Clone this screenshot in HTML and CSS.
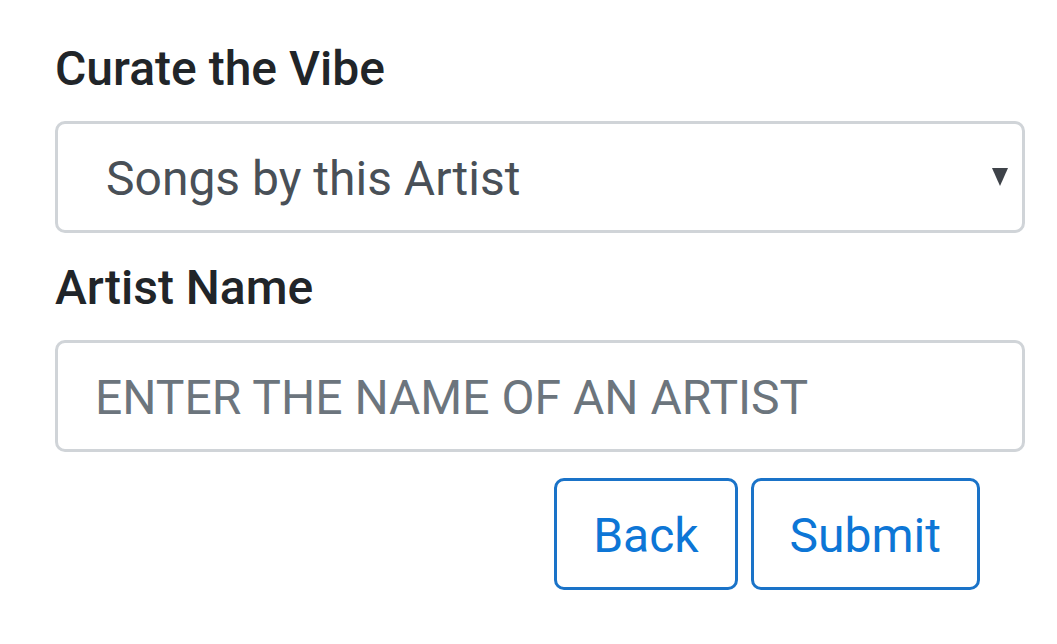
FILE: index.html
```html
<!DOCTYPE html>
<html>
<head>
<meta charset="utf-8">
<link rel="stylesheet" href="styles.css">
</head>
<body>
<form class="form">
  <label class="label">Curate the Vibe</label>
  <div class="select">
    <span class="select-text">Songs by this Artist</span>
    <svg class="caret" width="16" height="18" viewBox="0 0 16 18"><polygon points="0,0 16,0 8,18" fill="#3e4349"/></svg>
  </div>
  <label class="label label-2">Artist Name</label>
  <div class="input"><span class="placeholder">ENTER THE NAME OF AN ARTIST</span></div>
  <div class="actions">
    <button type="button" class="btn">Back</button>
    <button type="button" class="btn">Submit</button>
  </div>
</form>
</body>
</html>
```
FILE: styles.css
```css
html, body {
  margin: 0;
  padding: 0;
  background: #ffffff;
}
body {
  font-family: Roboto, "Liberation Sans", sans-serif;
  color: #212529;
}
.form {
  display: flex;
  flex-direction: column;
  padding: 40px 32px 0 55px;
}
.label {
  font-size: 48px;
  font-weight: 500;
  line-height: 58px;
  height: 58px;
  margin-bottom: 23px;
}
.label-2 {
  margin-top: 26px;
}
.select, .input {
  box-sizing: border-box;
  height: 112px;
  border: 3px solid #d0d4d8;
  border-radius: 10px;
  display: flex;
  align-items: center;
}
.select {
  padding: 2px 14px 0 48px;
  justify-content: space-between;
}
.select-text {
  font-size: 48px;
  color: #495057;
}
.caret {
  display: block;
  margin-top: -2px;
}
.input {
  padding: 2px 37px 0;
}
.placeholder {
  font-size: 48px;
  color: #6c757d;
}
.actions {
  display: flex;
  justify-content: flex-end;
  gap: 13px;
  margin-top: 26px;
  padding-right: 45px;
}
.btn {
  box-sizing: border-box;
  height: 112px;
  background: #fff;
  border: 3px solid #1a73c8;
  border-radius: 10px;
  color: #0d76d6;
  font-family: Roboto, "Liberation Sans", sans-serif;
  font-size: 48px;
  padding: 2px 36px 0;
}
```
